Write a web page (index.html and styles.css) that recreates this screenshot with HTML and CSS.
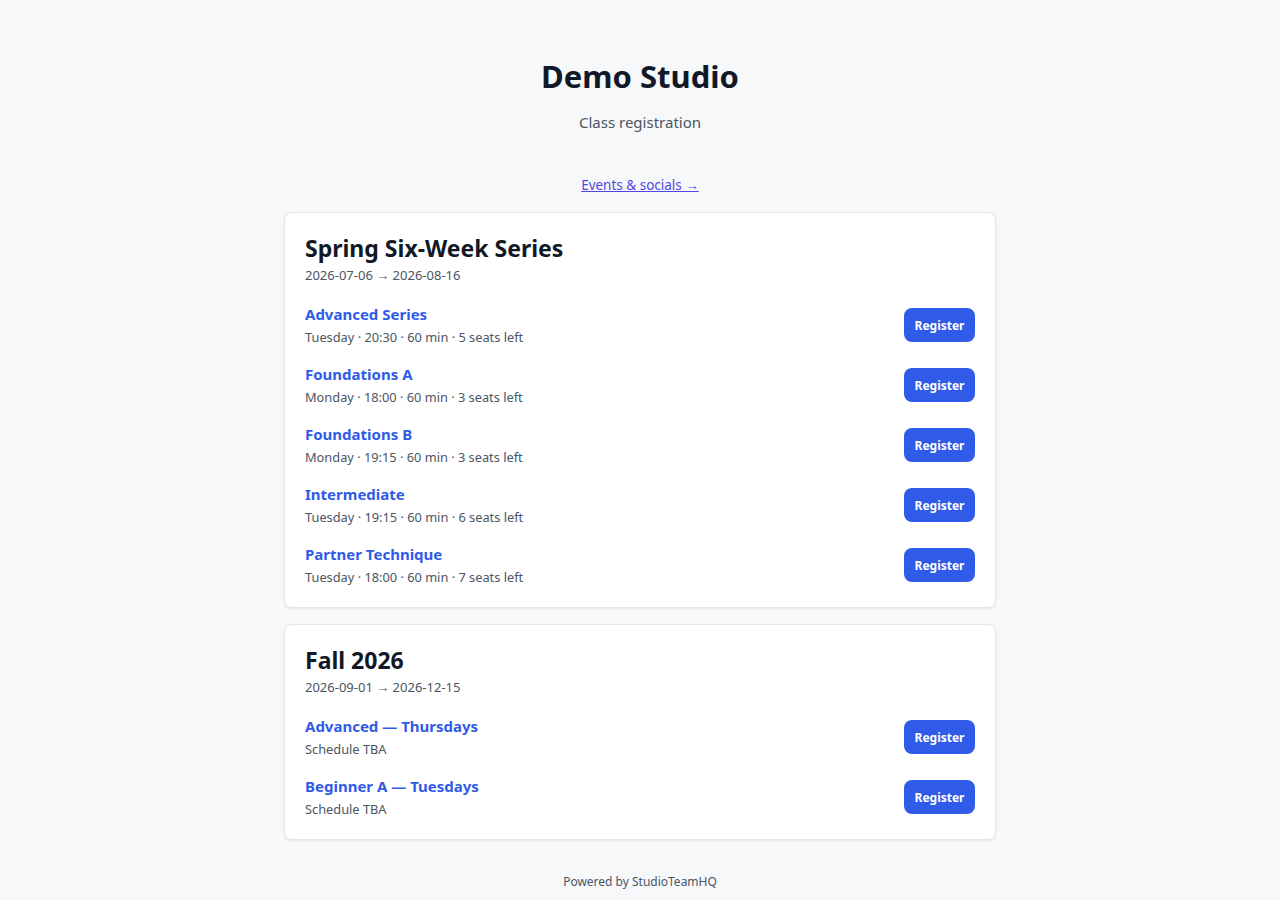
FILE: index.html
```html
<!DOCTYPE html>
<html lang="en">
<head>
<meta charset="utf-8">
<title>Demo Studio</title>
<link rel="stylesheet" href="styles.css">
</head>
<body>
<main class="page">
  <header class="header">
    <h1 class="studio-name">Demo Studio</h1>
    <p class="subtitle">Class registration</p>
    <a class="events-link" href="#">Events &amp; socials →</a>
  </header>

  <section class="card">
    <h2 class="term-title">Spring Six-Week Series</h2>
    <p class="term-dates">2026-07-06 → 2026-08-16</p>
    <ul class="class-list">
      <li class="class-row">
        <div class="class-info">
          <a class="class-name" href="#">Advanced Series</a>
          <div class="class-meta">Tuesday · 20:30 · 60 min · 5 seats left</div>
        </div>
        <button class="register-btn">Register</button>
      </li>
      <li class="class-row">
        <div class="class-info">
          <a class="class-name" href="#">Foundations A</a>
          <div class="class-meta">Monday · 18:00 · 60 min · 3 seats left</div>
        </div>
        <button class="register-btn">Register</button>
      </li>
      <li class="class-row">
        <div class="class-info">
          <a class="class-name" href="#">Foundations B</a>
          <div class="class-meta">Monday · 19:15 · 60 min · 3 seats left</div>
        </div>
        <button class="register-btn">Register</button>
      </li>
      <li class="class-row">
        <div class="class-info">
          <a class="class-name" href="#">Intermediate</a>
          <div class="class-meta">Tuesday · 19:15 · 60 min · 6 seats left</div>
        </div>
        <button class="register-btn">Register</button>
      </li>
      <li class="class-row">
        <div class="class-info">
          <a class="class-name" href="#">Partner Technique</a>
          <div class="class-meta">Tuesday · 18:00 · 60 min · 7 seats left</div>
        </div>
        <button class="register-btn">Register</button>
      </li>
    </ul>
  </section>

  <section class="card">
    <h2 class="term-title">Fall 2026</h2>
    <p class="term-dates">2026-09-01 → 2026-12-15</p>
    <ul class="class-list">
      <li class="class-row">
        <div class="class-info">
          <a class="class-name" href="#">Advanced — Thursdays</a>
          <div class="class-meta">Schedule TBA</div>
        </div>
        <button class="register-btn">Register</button>
      </li>
      <li class="class-row">
        <div class="class-info">
          <a class="class-name" href="#">Beginner A — Tuesdays</a>
          <div class="class-meta">Schedule TBA</div>
        </div>
        <button class="register-btn">Register</button>
      </li>
    </ul>
  </section>

  <footer class="footer">Powered by StudioTeamHQ</footer>
</main>
</body>
</html>
```

FILE: styles.css
```css
* { box-sizing: border-box; }

html, body {
  margin: 0;
  padding: 0;
}

body {
  background: #f7f8fa;
  color: #111827;
  font-family: "Noto Sans", "Open Sans", Arial, sans-serif;
}

.page {
  width: 712px;
  margin: 0 auto;
  padding-top: 56px;
  padding-bottom: 8px;
}

.header {
  text-align: center;
  display: flex;
  flex-direction: column;
  align-items: center;
}

.studio-name {
  margin: 0;
  font-size: 31px;
  line-height: 40px;
  font-weight: 700;
  color: #111827;
}

.subtitle {
  margin: 14px 0 0;
  font-size: 15px;
  line-height: 24px;
  color: #4b5563;
}

.events-link {
  margin-top: 41px;
  font-size: 13.5px;
  line-height: 20px;
  color: #4f46e5;
  text-decoration: underline;
}

.card {
  margin-top: 17px;
  background: #ffffff;
  border: 1px solid #e5e7eb;
  border-radius: 8px;
  box-shadow: 0 1px 3px rgba(0, 0, 0, 0.08);
  padding: 20px;
}

.card + .card {
  margin-top: 16px;
}

.term-title {
  margin: 0;
  font-size: 23px;
  line-height: 30px;
  font-weight: 700;
  color: #111827;
}

.term-dates {
  margin: 2px 0 0;
  font-size: 13px;
  line-height: 20px;
  color: #4b5563;
}

.class-list {
  list-style: none;
  margin: 18px 0 0;
  padding: 0;
  display: flex;
  flex-direction: column;
  gap: 16px;
}

.class-row {
  display: flex;
  align-items: center;
  justify-content: space-between;
  height: 44px;
}

.class-info {
  display: flex;
  flex-direction: column;
}

.class-name {
  font-size: 15px;
  line-height: 22px;
  font-weight: 700;
  color: #2f5be8;
  text-decoration: none;
}

.class-meta {
  margin-top: 2px;
  font-size: 12.8px;
  line-height: 20px;
  color: #4b5563;
}

.register-btn {
  background: #2f5be8;
  color: #ffffff;
  border: none;
  border-radius: 8px;
  width: 71px;
  height: 34px;
  padding: 0;
  font-family: inherit;
  font-size: 12px;
  font-weight: 700;
  cursor: pointer;
}

.footer {
  margin-top: 32px;
  text-align: center;
  font-size: 12px;
  line-height: 20px;
  color: #4b5563;
}
```
